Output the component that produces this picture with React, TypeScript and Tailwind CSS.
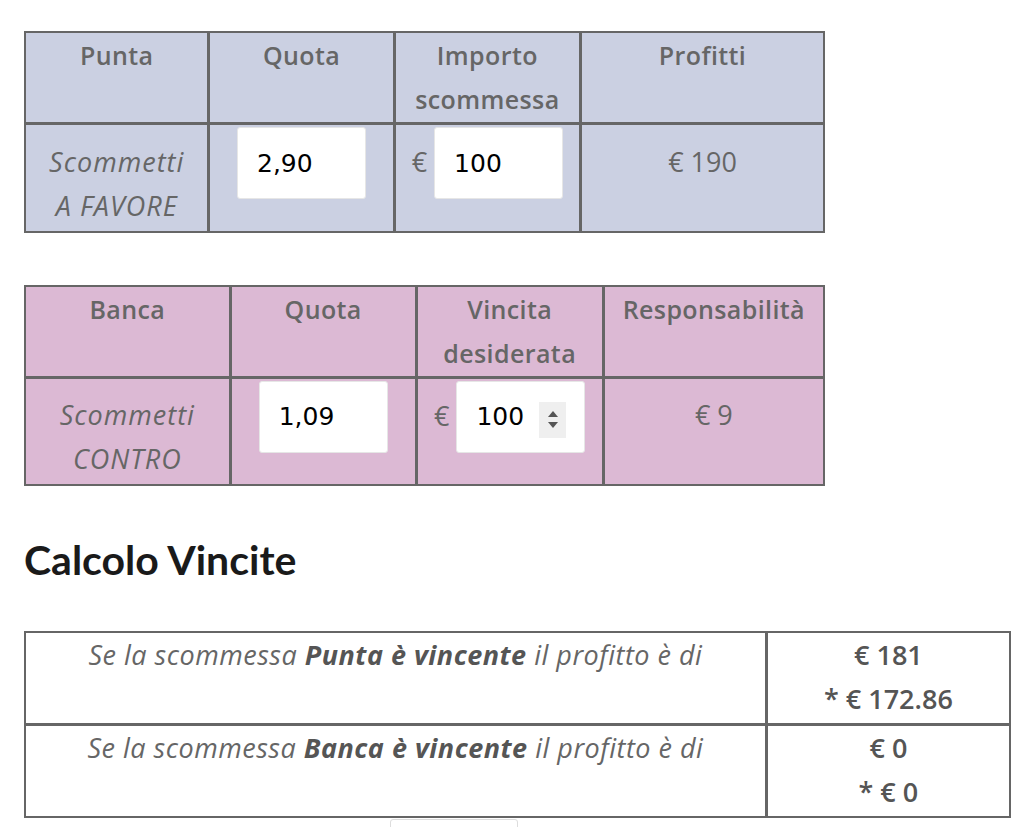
import React from "react";

const cellFont = { fontFamily: "'Open Sans', Lato, sans-serif" };
const inputFont = { fontFamily: "'DejaVu Sans', 'Open Sans', sans-serif" };

function MoneyInput({ value, spinner = false }: { value: string; spinner?: boolean }) {
  return (
    <span className="relative inline-block align-baseline">
      <input
        type="text"
        defaultValue={value}
        className="w-[129px] h-[72px] bg-white rounded-[3px] border border-[#e6e6e6] pl-[19px] text-[25px] tracking-normal text-black outline-none"
        style={inputFont}
      />
      {spinner && (
        <span className="absolute right-[19px] top-[21px] w-[27px] h-[36px] bg-[#efefef] flex flex-col items-center justify-center gap-[5px]">
          <svg width="10" height="6" viewBox="0 0 10 6">
            <path d="M5 0 L10 6 L0 6 Z" fill="#555" />
          </svg>
          <svg width="10" height="6" viewBox="0 0 10 6">
            <path d="M0 0 L10 0 L5 6 Z" fill="#555" />
          </svg>
        </span>
      )}
    </span>
  );
}

type BetTableProps = {
  bg: string;
  cols: string[];
  headers: React.ReactNode[];
  label: [string, string];
  odds: string;
  amount: string;
  result: string;
  spinner?: boolean;
};

function BetTable({ bg, cols, headers, label, odds, amount, result, spinner }: BetTableProps) {
  const th = "border-b-[3px] border-[#666] align-top font-semibold text-[25px] tracking-[0.4px] leading-[44px] pt-0 pb-[1px]";
  const td = "border-[#666] align-baseline text-[27px] leading-[44px] pt-[2px] pb-[3px]";
  return (
    <table
      className={`w-[801px] border-separate border-spacing-0 border-2 border-[#666] text-center text-[#666] ${bg}`}
      style={cellFont}
    >
      <colgroup>
        {cols.map((w, i) => (
          <col key={i} style={{ width: w }} />
        ))}
      </colgroup>
      <thead>
        <tr>
          {headers.map((h, i) => (
            <th key={i} className={i === headers.length - 1 ? th : `${th} border-r-[3px]`}>
              {h}
            </th>
          ))}
        </tr>
      </thead>
      <tbody>
        <tr>
          <td className={`${td} border-r-[3px] italic tracking-[1px]`}>
            {label[0]}
            <br />
            {label[1]}
          </td>
          <td className={`${td} border-r-[3px]`}>
            <MoneyInput value={odds} />
          </td>
          <td className={`${td} border-r-[3px]`}>
            € <MoneyInput value={amount} spinner={spinner} />
          </td>
          <td className={td}>{result}</td>
        </tr>
      </tbody>
    </table>
  );
}

export default function App() {
  return (
    <div className="min-h-[827px] bg-white pl-[24px] pt-[31px] overflow-hidden">
      <BetTable
        bg="bg-[#cbd0e2]"
        cols={["185px", "186px", "187px", "243px"]}
        headers={[
          "Punta",
          "Quota",
          <>
            Importo
            <br />
            scommessa
          </>,
          "Profitti",
        ]}
        label={["Scommetti", "A FAVORE"]}
        odds="2,90"
        amount="100"
        result="€ 190"
      />

      <div className="h-[52px]" />

      <BetTable
        bg="bg-[#dcb9d4]"
        cols={["207px", "187px", "188px", "219px"]}
        headers={[
          "Banca",
          "Quota",
          <>
            Vincita
            <br />
            desiderata
          </>,
          "Responsabilità",
        ]}
        label={["Scommetti", "CONTRO"]}
        odds="1,09"
        amount="100"
        result="€ 9"
        spinner
      />

      <h2
        className="mt-[49px] text-[41px] font-bold leading-[50px] text-[#1a1a1a]"
        style={{ fontFamily: "Lato, 'Open Sans', sans-serif" }}
      >
        Calcolo Vincite
      </h2>

      {/* riepilogo profitti */}
      <table
        className="mt-[46px] w-[987px] border-separate border-spacing-0 border-2 border-[#666] text-center text-[27px] leading-[44px] text-[#666]"
        style={cellFont}
      >
        <colgroup>
          <col style={{ width: "745px" }} />
          <col style={{ width: "242px" }} />
        </colgroup>
        <tbody>
          <tr>
            <td className="border-r-[3px] border-b-[3px] border-[#666] align-top italic tracking-[0.5px] p-0 pb-[46px]">
              Se la scommessa <b className="font-bold text-[#555]">Punta è vincente</b> il profitto è di
            </td>
            <td className="border-b-[3px] border-[#666] align-top font-semibold text-[#555] p-0 pb-[2px]">
              € 181
              <br />* € 172.86
            </td>
          </tr>
          <tr>
            <td className="border-r-[3px] border-[#666] align-top italic tracking-[0.5px] p-0 pb-[46px]">
              Se la scommessa <b className="font-bold text-[#555]">Banca è vincente</b> il profitto è di
            </td>
            <td className="align-top font-semibold text-[#555] p-0 pb-[2px]">
              € 0
              <br />* € 0
            </td>
          </tr>
        </tbody>
      </table>

      <div className="ml-[366px] mt-[1px] w-[128px] h-[40px] rounded-[3px] border border-[#ddd] bg-white" />
    </div>
  );
}
